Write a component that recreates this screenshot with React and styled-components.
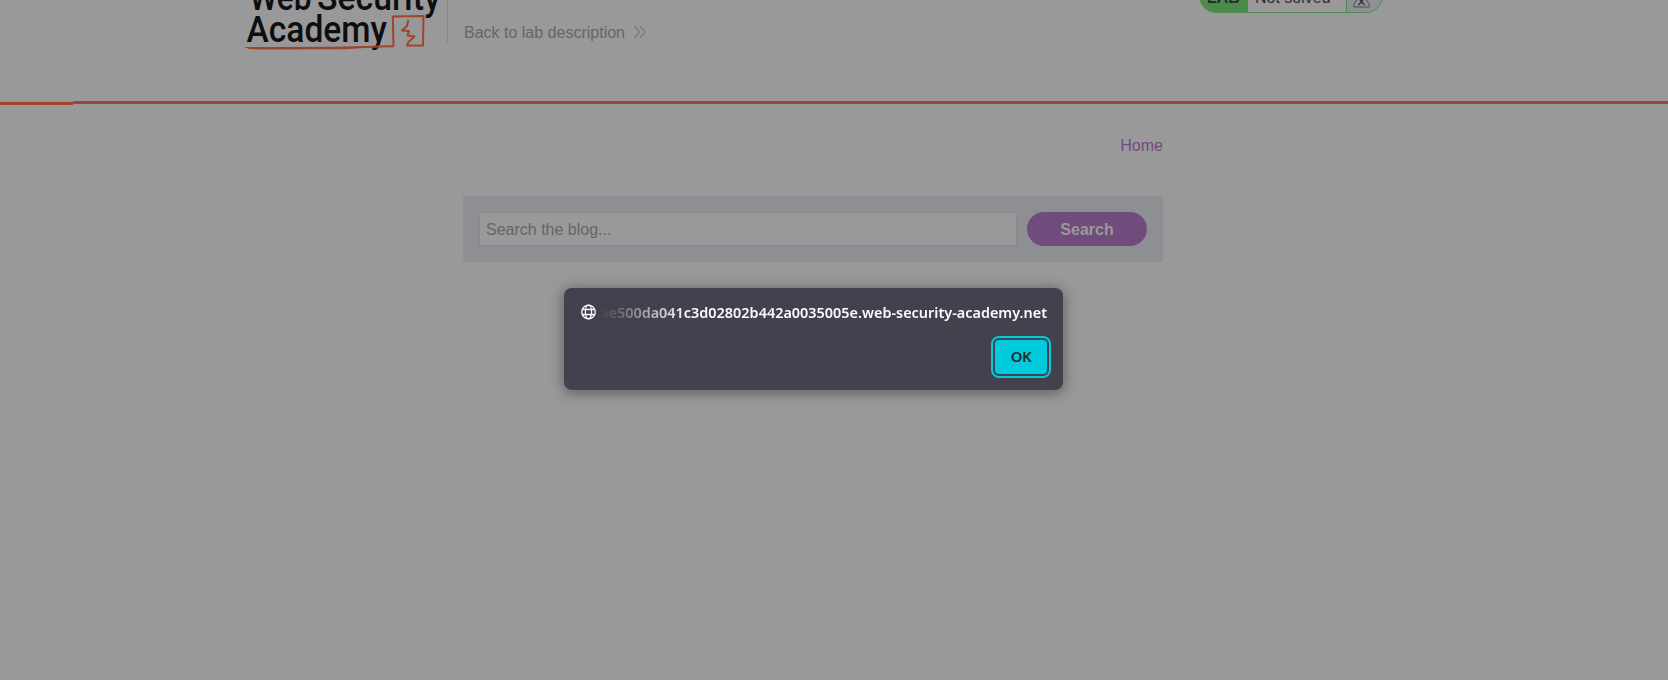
import React from "react";
import styled, { createGlobalStyle } from "styled-components";

const Global = createGlobalStyle`
  *, *::before, *::after { box-sizing: border-box; }
  html, body { margin: 0; background: #99999a; overflow: hidden; }
  body { font: 16px/20px "Liberation Sans", Arial, sans-serif; }
`;
const Page = styled.div`
  height: 680px;
  overflow: hidden;
  position: relative;
`;
const Header = styled.header`
  height: 101px;
  padding: 0 285px 0 243px;
  display: flex;
  align-items: flex-start;
`;
const Logo = styled.svg`
  display: block;
  width: 204px;
  height: 60px;
  flex: none;
`;
const BackArea = styled.div`
  height: 43px;
  border-left: 1px solid #858586;
  padding: 23px 0 0 16px;
  flex: 1;
`;
const BackLink = styled.a`
  display: flex;
  align-items: center;
  gap: 9px;
  color: #666668;
  svg { margin-top: -2px; }
`;
const Status = styled.div`
  display: flex;
  width: 184px;
  height: 34px;
  margin-top: -21px;
  border: 1px solid #4c8a4c;
  border-radius: 17px;
  overflow: hidden;
  line-height: 36px;
`;
const StatusTag = styled.b`
  width: 48px;
  padding-left: 7px;
  background: #4c8a4c;
  color: #252b27;
`;
const StatusText = styled.span`
  flex: 1;
  padding-left: 7px;
  color: #303033;
`;
const StatusIcon = styled.span`
  width: 36px;
  border-left: 1px solid #4c8a4c;
  background: #8f9093;
  padding: 9px 0 0 6px;
  line-height: 0;
`;
const Rule = styled.div`
  display: flex;
  height: 4px;
`;
const RulePart = styled.i`
  height: 3px;
  background: #a0452d;
  width: ${(p) => p.$width || "auto"};
  flex: ${(p) => (p.$width ? "none" : 1)};
  align-self: ${(p) => (p.$low ? "flex-end" : "flex-start")};
`;
const Content = styled.main`
  width: 700px;
  margin-left: 463px;
`;
const Nav = styled.nav`
  display: flex;
  justify-content: flex-end;
  padding: 31px 0 40px;
  color: #704c7c;
`;
const SearchBar = styled.section`
  height: 66px;
  padding: 16px;
  display: flex;
  gap: 10px;
  background: #8d8f92;
`;
const SearchInput = styled.input`
  flex: 1;
  min-width: 0;
  height: 34px;
  border: 1px solid #88898b;
  padding: 1px 6px 0;
  background: #99999a;
  font: inherit;
  border-radius: 0;
  outline: 0;
  &::placeholder { color: #656567; opacity: 1; }
`;
const SearchButton = styled.button`
  width: 120px;
  height: 34px;
  border: 0;
  border-radius: 17px;
  background: #704c7c;
  color: #99999a;
  font: bold 16px "Liberation Sans", Arial, sans-serif;
  padding: 1px 0 0;
`;
const Dialog = styled.div`
  position: absolute;
  left: 564px;
  top: 288px;
  width: 499px;
  height: 102px;
  border-radius: 8px;
  background: #42414d;
  box-shadow: 0 0 0 1px rgba(128, 128, 131, 0.7), 0 2px 14px rgba(40, 40, 45, 0.6);
  padding: 14px 12px 12px 17px;
  display: flex;
  flex-direction: column;
  justify-content: space-between;
  font-family: "Noto Sans", "Open Sans", sans-serif;
`;
const Title = styled.div`
  display: flex;
  align-items: center;
  gap: 5px;
  height: 20px;
  padding-right: 4px;
`;
const Host = styled.svg`
  width: 447px;
  height: 20px;
  display: block;
  mask-image: linear-gradient(to right, transparent 0, #000 84px);
`;
const OkButton = styled.button`
  align-self: flex-end;
  width: 52px;
  height: 34px;
  margin: 0 4px 4px 0;
  border: 0;
  border-radius: 4px;
  background: #00cadb;
  color: #2b2a33;
  outline: 2px solid #00cadb;
  outline-offset: 2px;
  font: 600 15px "Noto Sans", "Open Sans", sans-serif;
  letter-spacing: -0.5px;
  padding: 0 0 2px;
`;

export default function App() {
  return (
    <Page>
      <Global />
      <Header>
        <Logo viewBox="243 0 204 60">
          <g fill="#0e0e10" fontFamily="Roboto, sans-serif" fontSize="37" fontWeight="500">
            <text x="249.5" y="9.5" textLength="62" lengthAdjust="spacingAndGlyphs">Web</text>
            <text x="317" y="9.5" textLength="123.5" lengthAdjust="spacingAndGlyphs">Security</text>
            <text x="246.5" y="42" textLength="140.5" lengthAdjust="spacingAndGlyphs">Academy</text>
          </g>
          <g fill="none" stroke="#a0452d" strokeWidth="2" strokeLinejoin="round">
            <path d="M393.5 46.5 392.8 16.5 423.5 16 423 45.5 407 45.5 408.5 42 414.5 36.5 407.5 35.5 409 31 402 30.5 407 26 408.3 20" />
            <path d="M393.5 46.2 380 46.5 340 48 248 48" />
          </g>
          <path d="M243.5 47 260 47 340 46.8 378 46 345 49.2 260 49.5 250 49Z" fill="#a0452d" />
        </Logo>
        <BackArea>
          <BackLink>
            Back to lab description
            <svg width="12" height="14" viewBox="0 0 12 14" fill="none" stroke="#666668">
              <path d="M.5 1 5.5 7 .5 13M6 1l5 6-5 6" />
            </svg>
          </BackLink>
        </BackArea>
        <Status>
          <StatusTag>LAB</StatusTag>
          <StatusText>Not solved</StatusText>
          <StatusIcon>
            <svg width="17" height="19" viewBox="0 0 17 19" fill="none" stroke="#4f5053">
              <path d="M5 1h7M6 1v6L.8 15.5V18h15.4v-2.5L11 7V1" />
              <path d="m5.5 9 6 7m0-7-6 7" stroke="#303033" strokeWidth="1.3" />
            </svg>
          </StatusIcon>
        </Status>
      </Header>
      <Rule>
        <RulePart $width="73px" $low />
        <RulePart />
      </Rule>
      <Content>
        <Nav>Home</Nav>
        <SearchBar>
          <SearchInput placeholder="Search the blog..." />
          <SearchButton>Search</SearchButton>
        </SearchBar>
      </Content>
      <Dialog>
        <Title>
          <svg width="15" height="16" viewBox="0 0 15 16" fill="none" stroke="#fbfbfe" strokeWidth="1.3">
            <circle cx="7.5" cy="8" r="6.8" />
            <ellipse cx="7.5" cy="8" rx="3.1" ry="6.8" />
            <path d="M1.3 5.5h12.4M1.3 10.5h12.4" />
          </svg>
          <Host>
            <text x="-1" y="15.5" fill="#fbfbfe" fontSize="15" fontWeight="600" textLength="447" lengthAdjust="spacingAndGlyphs">ae500da041c3d02802b442a0035005e.web-security-academy.net</text>
          </Host>
        </Title>
        <OkButton>OK</OkButton>
      </Dialog>
    </Page>
  );
}
